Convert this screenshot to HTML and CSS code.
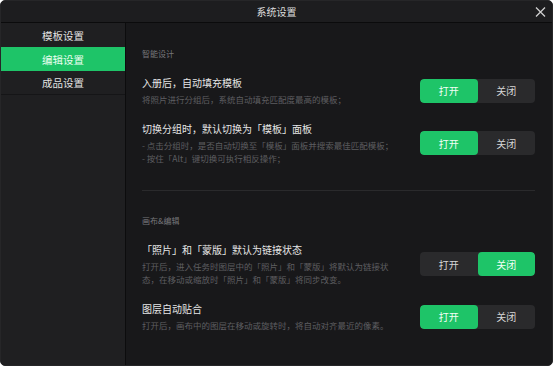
FILE: index.html
```html
<!DOCTYPE html>
<html lang="zh">
<head>
<meta charset="utf-8">
<link rel="stylesheet" href="styles.css">
</head>
<body>
<div class="window">
  <div class="titlebar">
    <span class="title">系统设置</span>
    <svg class="close" width="11" height="10" viewBox="0 0 11 10"><path d="M1 0.5 L10 9.5 M10 0.5 L1 9.5" stroke="#cfcfcf" stroke-width="1.3" fill="none"/></svg>
  </div>
  <div class="main">
    <div class="sidebar">
      <div class="nav-item">模板设置</div>
      <div class="nav-item active">编辑设置</div>
      <div class="nav-item last">成品设置</div>
    </div>
    <div class="content">
      <div class="section-head">智能设计</div>
      <div class="row first">
        <div class="text">
          <div class="row-title">入册后，自动填充模板</div>
          <div class="row-desc">将照片进行分组后，系统自动填充匹配度最高的模板；</div>
        </div>
        <div class="toggle"><span class="opt on">打开</span><span class="opt">关闭</span></div>
      </div>
      <div class="row">
        <div class="text">
          <div class="row-title">切换分组时，默认切换为「模板」面板</div>
          <div class="row-desc">- 点击分组时，是否自动切换至「模板」面板并搜索最佳匹配模板；<br>- 按住「Alt」键切换可执行相反操作；</div>
        </div>
        <div class="toggle"><span class="opt on">打开</span><span class="opt">关闭</span></div>
      </div>
      <div class="divider"></div>
      <div class="section-head">画布&amp;编辑</div>
      <div class="row first">
        <div class="text">
          <div class="row-title">「照片」和「蒙版」默认为链接状态</div>
          <div class="row-desc">打开后，进入任务时图层中的「照片」和「蒙版」将默认为链接状<br>态，在移动或缩放时「照片」和「蒙版」将同步改变。</div>
        </div>
        <div class="toggle"><span class="opt">打开</span><span class="opt on">关闭</span></div>
      </div>
      <div class="row">
        <div class="text">
          <div class="row-title">图层自动贴合</div>
          <div class="row-desc">打开后，画布中的图层在移动或旋转时，将自动对齐最近的像素。</div>
        </div>
        <div class="toggle"><span class="opt on">打开</span><span class="opt">关闭</span></div>
      </div>
    </div>
  </div>
</div>
</body>
</html>
```

FILE: styles.css
```css
* { box-sizing: border-box; }
html, body { margin: 0; padding: 0; background: #ffffff; }
body { font-family: "Noto Sans CJK SC", "Noto Sans", sans-serif; }

.window {
  width: 553px;
  height: 366px;
  background: #18181a;
  border-radius: 5px;
  overflow: hidden;
  border: 1px solid #262628;
  display: flex;
  flex-direction: column;
}

.titlebar {
  height: 22px;
  flex: 0 0 22px;
  background: #1d1d1f;
  border-bottom: 1px solid #0b0b0c;
  display: flex;
  align-items: center;
  justify-content: center;
  position: relative;
}
.title {
  color: #dcdcdc;
  font-size: 10px;
  line-height: 14px;
}
.close {
  position: absolute;
  right: 6px;
  top: 6px;
}

.main {
  flex: 1;
  display: flex;
  min-height: 0;
}

.sidebar {
  width: 125px;
  flex: 0 0 125px;
  background: #1f1f21;
  border-right: 1px solid #0c0c0d;
  display: flex;
  flex-direction: column;
}
.nav-item {
  height: 24px;
  display: flex;
  align-items: center;
  justify-content: center;
  color: #e2e2e2;
  font-size: 10.5px;
}
.nav-item.active {
  background: #1ec468;
  color: #eafff1;
}
.nav-item.last {
  border-bottom: 1px solid #151517;
}

.content {
  flex: 1;
  padding: 25px 17px 0 16px;
  display: flex;
  flex-direction: column;
}

.section-head {
  color: #77777a;
  font-size: 8px;
  line-height: 12px;
}

.row {
  display: flex;
  align-items: center;
  justify-content: space-between;
  margin-top: 15px;
}
.row.first { margin-top: 15px; }

.row-title {
  color: #e6e6e6;
  font-size: 10px;
  line-height: 16px;
}
.row-desc {
  color: #5e5e61;
  font-size: 8.5px;
  line-height: 13px;
  margin-top: 2px;
}

.toggle {
  display: flex;
  width: 115px;
  height: 24px;
  border-radius: 4px;
  background: #2a2a2c;
  overflow: hidden;
  flex: 0 0 115px;
}
.opt {
  flex: 1;
  display: flex;
  align-items: center;
  justify-content: center;
  color: #d6d6d6;
  font-size: 10px;
}
.opt.on {
  background: #1ec468;
  color: #f2fff6;
  border-radius: 4px;
}

.divider {
  height: 1px;
  background: #2a2a2c;
  margin-top: 25px;
  margin-bottom: 24px;
}
```
